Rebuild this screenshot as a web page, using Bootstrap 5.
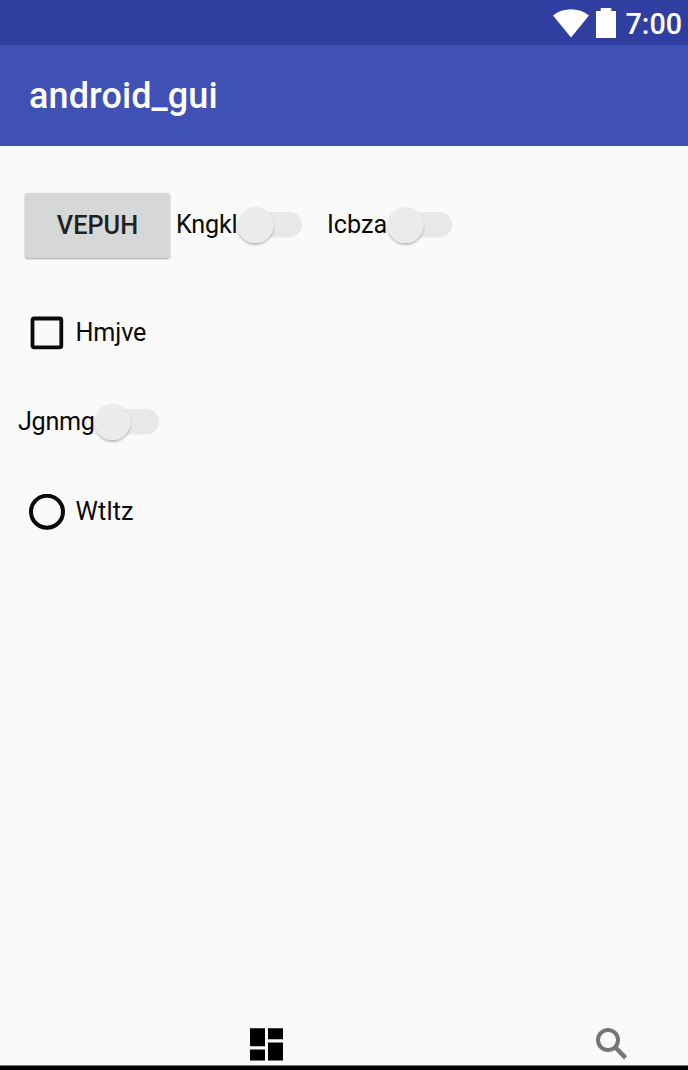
<!DOCTYPE html>
<html lang="en">
<head>
<meta charset="utf-8">
<meta name="viewport" content="width=device-width, initial-scale=1">
<title>android_gui</title>
<link href="https://cdn.jsdelivr.net/npm/bootstrap@5.3.0/dist/css/bootstrap.min.css" rel="stylesheet">
<style>
body{font-family:Roboto,sans-serif;background:#fafafa;color:#0a0a0a;font-size:25.2px;line-height:36px;height:1070px;overflow:hidden}
.status-bar{height:45px;background:#303f9f;font-size:28.7px;padding:1px 6px 0 0}
.clock{font-weight:500;padding-top:2px}
.battery{margin:0 10px 0 7px}
.app-bar{height:101px;background:#3f51b5;padding-left:29px}
.app-title{font-size:36px;line-height:40px;font-weight:500;letter-spacing:.1px}
.btn-raised{width:145px;height:65px;background:#d6d8d7;border:0;border-radius:3px;font-size:25.3px;font-weight:500;color:#212121;padding:0;box-shadow:0 1px 2px rgba(0,0,0,.35)}
.first-row{height:65px;margin-top:47px;padding-left:25px}
.check-row{height:36px;margin-top:57px;padding-left:29px}
.switch-row{height:36px;margin-top:53px;padding-left:18px}
.radio-row{height:36px;margin-top:54px;padding-left:29px}
.lbl{display:block;white-space:nowrap}
.first-row .lbl{padding-bottom:1px}
.w-a{width:61px;margin-left:6px;letter-spacing:-.2px}
.w-b{width:60px;margin-left:24px}
.w-c{width:76px;letter-spacing:-.3px}
.beside{margin-left:10.5px}
.tight{letter-spacing:-.15px}
.wide{letter-spacing:.15px}
.toggle{display:block;flex:none;overflow:visible;margin-bottom:1px}
.bottom-nav{height:42px;padding:5px 59px 0 250px}
.edge{height:5px;background:#000;border-top:1px solid #777}
</style>
</head>
<body class="d-flex flex-column">
<svg width="0" height="0" class="position-absolute" aria-hidden="true"><defs>
<filter id="sh" x="-30%" y="-30%" width="160%" height="170%"><feDropShadow dx="0" dy="1.8" stdDeviation="1.2" flood-color="#000" flood-opacity=".28"/></filter>
<symbol id="switch" viewBox="0 0 66 36" overflow="visible"><rect x="12" y="5" width="53" height="25.5" rx="12.7" fill="#e8e8e8"/><circle cx="18.5" cy="18" r="18" fill="#ebebeb" filter="url(#sh)"/></symbol>
</defs></svg>
<header>
<div class="status-bar d-flex align-items-center justify-content-end text-white">
<svg width="36" height="29" viewBox="0 0 36 29" fill="#fff"><path d="M0 6.500C10-1.800 26-1.800 36 6.500L18 28.500Z"/></svg>
<svg class="battery" width="20" height="30" viewBox="0 0 20 30" fill="#fff"><path d="M4.700 0h10.600v3H20v27H0V3h4.700z"/></svg>
<span class="clock">7:00</span>
</div>
<nav class="app-bar d-flex align-items-center text-white"><span class="app-title">android_gui</span></nav>
</header>
<main class="flex-grow-1">
<div class="first-row d-flex align-items-center">
<button class="btn btn-raised" type="button">VEPUH</button>
<span class="lbl w-a">Kngkl</span><svg class="toggle" width="66" height="36"><use href="#switch"/></svg>
<span class="lbl w-b">Icbza</span><svg class="toggle" width="66" height="36"><use href="#switch"/></svg>
</div>
<div class="check-row d-flex align-items-center">
<svg width="36" height="36"><rect x="3.500" y="3.500" width="28.800" height="28.800" rx="1.500" fill="none" stroke="#0a0a0a" stroke-width="3.800"/></svg>
<span class="lbl beside tight">Hmjve</span>
</div>
<div class="switch-row d-flex align-items-center"><span class="lbl w-c">Jgnmg</span><svg class="toggle" width="66" height="36"><use href="#switch"/></svg></div>
<div class="radio-row d-flex align-items-center">
<svg width="36" height="36"><circle cx="18" cy="17.700" r="16" fill="none" stroke="#0a0a0a" stroke-width="4"/></svg>
<span class="lbl beside wide">Wtltz</span>
</div>
</main>
<footer>
<div class="bottom-nav d-flex justify-content-between">
<svg width="33" height="33"><path d="M0 .3h15V18.300H0zM18 .3h15V11.300H18zM0 21.500h15V32.500H0zM18 14.500h15V32.500H18z"/></svg>
<svg width="33" height="33" fill="none" stroke="#757575"><circle cx="12" cy="12" r="10" stroke-width="4"/><path d="M19 19 29.600 29.800" stroke-width="4.500"/></svg>
</div>
<div class="edge"></div>
</footer>
<script src="https://cdn.jsdelivr.net/npm/bootstrap@5.3.0/dist/js/bootstrap.bundle.min.js"></script>
</body>
</html>
